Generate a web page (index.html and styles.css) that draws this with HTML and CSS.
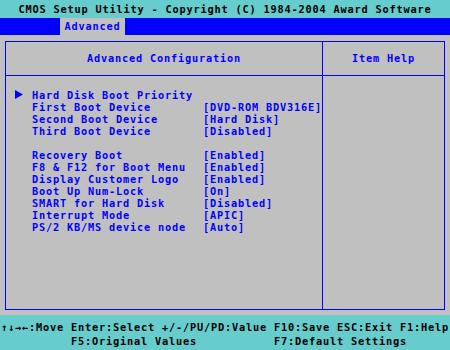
FILE: index.html
```html
<!DOCTYPE html>
<html lang="en">
<head>
    <meta charset="UTF-8">
    <title>CMOS Setup Utility</title>
    <link rel="stylesheet" href="styles.css">
</head>
<body>

    <div class="title-bar">CMOS Setup Utility - Copyright (C) 1984-2004 Award Software</div>

    <div class="menu-bar">
        <span class="tab">Advanced</span>
    </div>

    <div class="main">
        <div class="frame">
            <div class="cell head">Advanced Configuration</div>
            <div class="cell head">Item Help</div>

            <div class="cell items">
                <div class="row">
                    <svg class="marker" width="8" height="9" viewBox="0 0 8 9"><path d="M0 0 L8 4.5 L0 9 Z" fill="#0000ff"/></svg>
                    <span>Hard Disk Boot Priority</span>
                    <span></span>
                </div>
                <div class="row"><i></i><span>First Boot Device</span><span>[DVD-ROM BDV316E]</span></div>
                <div class="row"><i></i><span>Second Boot Device</span><span>[Hard Disk]</span></div>
                <div class="row"><i></i><span>Third Boot Device</span><span>[Disabled]</span></div>
                <div class="spacer"></div>
                <div class="row"><i></i><span>Recovery Boot</span><span>[Enabled]</span></div>
                <div class="row"><i></i><span>F8 &amp; F12 for Boot Menu</span><span>[Enabled]</span></div>
                <div class="row"><i></i><span>Display Customer Logo</span><span>[Enabled]</span></div>
                <div class="row"><i></i><span>Boot Up Num-Lock</span><span>[On]</span></div>
                <div class="row"><i></i><span>SMART for Hard Disk</span><span>[Disabled]</span></div>
                <div class="row"><i></i><span>Interrupt Mode</span><span>[APIC]</span></div>
                <div class="row"><i></i><span>PS/2 KB/MS device node</span><span>[Auto]</span></div>
            </div>
            <div class="cell help"></div>
        </div>
    </div>

    <div class="footer">
        <div class="keys">↑↓→←:Move Enter:Select +/-/PU/PD:Value F10:Save ESC:Exit F1:Help</div>
        <div class="keys">          F5:Original Values           F7:Default Settings</div>
    </div>

</body>
</html>
```

FILE: styles.css
```css
* { margin: 0; padding: 0; box-sizing: border-box; }
body {
    width: 450px; height: 350px; overflow: hidden; background: #c0c0c0;
    font-family: "DejaVu Sans Mono", "Liberation Mono", monospace; font-weight: bold;
    font-size: 10.3px; letter-spacing: 0.8px;
}
.title-bar { height: 18px; line-height: 18px; background: #66cccc; color: #000; text-align: center; white-space: pre; }
.menu-bar { height: 17px; background: #0000ff; padding-left: 60px; }
.tab { display: inline-block; width: 65px; height: 17px; line-height: 17px; background: #c0c0c0; color: #0000ff; text-align: center; }
.main { height: 280px; padding: 6px 5px 5px 5px; }
.frame {
    height: 269px; border: 1px solid #0000ff; background: #0000ff;
    display: grid; grid-template-columns: 316px 121px; grid-template-rows: 33px 1fr; gap: 1px;
}
.cell { background: #c0c0c0; color: #0000ff; }
.head { text-align: center; line-height: 33px; }
.items { padding-top: 13px; }
.row { display: grid; grid-template-columns: 26px 171px auto; height: 12px; line-height: 12px; white-space: pre; }
.marker { margin: 1px 0 0 9px; }
.spacer { height: 12px; }
.footer { height: 35px; background: #66cccc; color: #000; padding: 5px 0 0 1px; }
.keys { height: 14px; line-height: 14px; white-space: pre; }
```
